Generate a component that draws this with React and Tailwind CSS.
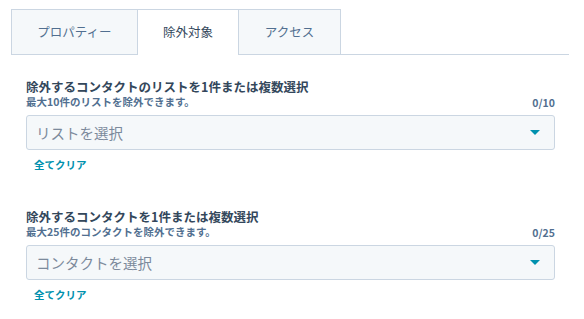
import React from 'react';

const tabs = ['プロパティー', '除外対象', 'アクセス'];

function Caret() {
  return (
    <svg width="10" height="5" viewBox="0 0 10 5" className="shrink-0">
      <path d="M0 0 L10 0 L5 5 Z" fill="#0091ae" />
    </svg>
  );
}

function Picker({ title, note, count, placeholder, first }) {
  return (
    <div className={first ? 'mt-[23px]' : 'mt-[36px]'}>
      <div className="text-[12.5px] leading-[17px] font-bold text-[#33475b]">{title}</div>
      <div className="flex items-end justify-between">
        <div className="text-[10.5px] leading-[14px] font-bold text-[#516f90]">{note}</div>
        <div className="text-[10.5px] leading-[14px] font-bold text-[#516f90] translate-y-[1px]">{count}</div>
      </div>
      <div className="mt-[6px] h-[35px] flex items-center justify-between bg-[#f5f8fa] border border-[#cbd6e2] rounded-[3px] pl-[9px] pr-[14px]">
        <span className="text-[14.5px] text-[#7c8a9c]">{placeholder}</span>
        <Caret />
      </div>
      <div className="mt-[8px] ml-[8px] text-[10.5px] leading-[14px] font-bold text-[#0091ae]">全てクリア</div>
    </div>
  );
}

export default function App() {
  return (
    <div className="w-[584px] h-[319px] bg-white overflow-hidden" style={{ fontFamily: '"Noto Sans CJK JP", "Noto Sans", sans-serif' }}>
      <div className="ml-[11px] w-[558px] pt-[9px]">
        <div className="flex h-[46px] border-b border-[#cbd6e2]">
          {tabs.map((t, i) => {
            const active = i === 1;
            const w = i === 0 ? 'w-[127px]' : i === 1 ? 'w-[101px]' : 'w-[102px]';
            return (
              <div
                key={t}
                className={`${w} flex items-center justify-center text-[12.5px] border-t border-[#cbd6e2] ${i === 0 ? 'border-l' : ''} border-r ${active ? 'bg-white text-[#33475b] -mb-px h-[46px]' : 'bg-[#f5f8fa] text-[#516f90]'}`}
              >
                {t}
              </div>
            );
          })}
        </div>
        <div className="pl-[15px] pr-[14px]">
          <Picker
            first
            title="除外するコンタクトのリストを1件または複数選択"
            note="最大10件のリストを除外できます。"
            count="0/10"
            placeholder="リストを選択"
          />
          <Picker
            title="除外するコンタクトを1件または複数選択"
            note="最大25件のコンタクトを除外できます。"
            count="0/25"
            placeholder="コンタクトを選択"
          />
        </div>
      </div>
    </div>
  );
}
